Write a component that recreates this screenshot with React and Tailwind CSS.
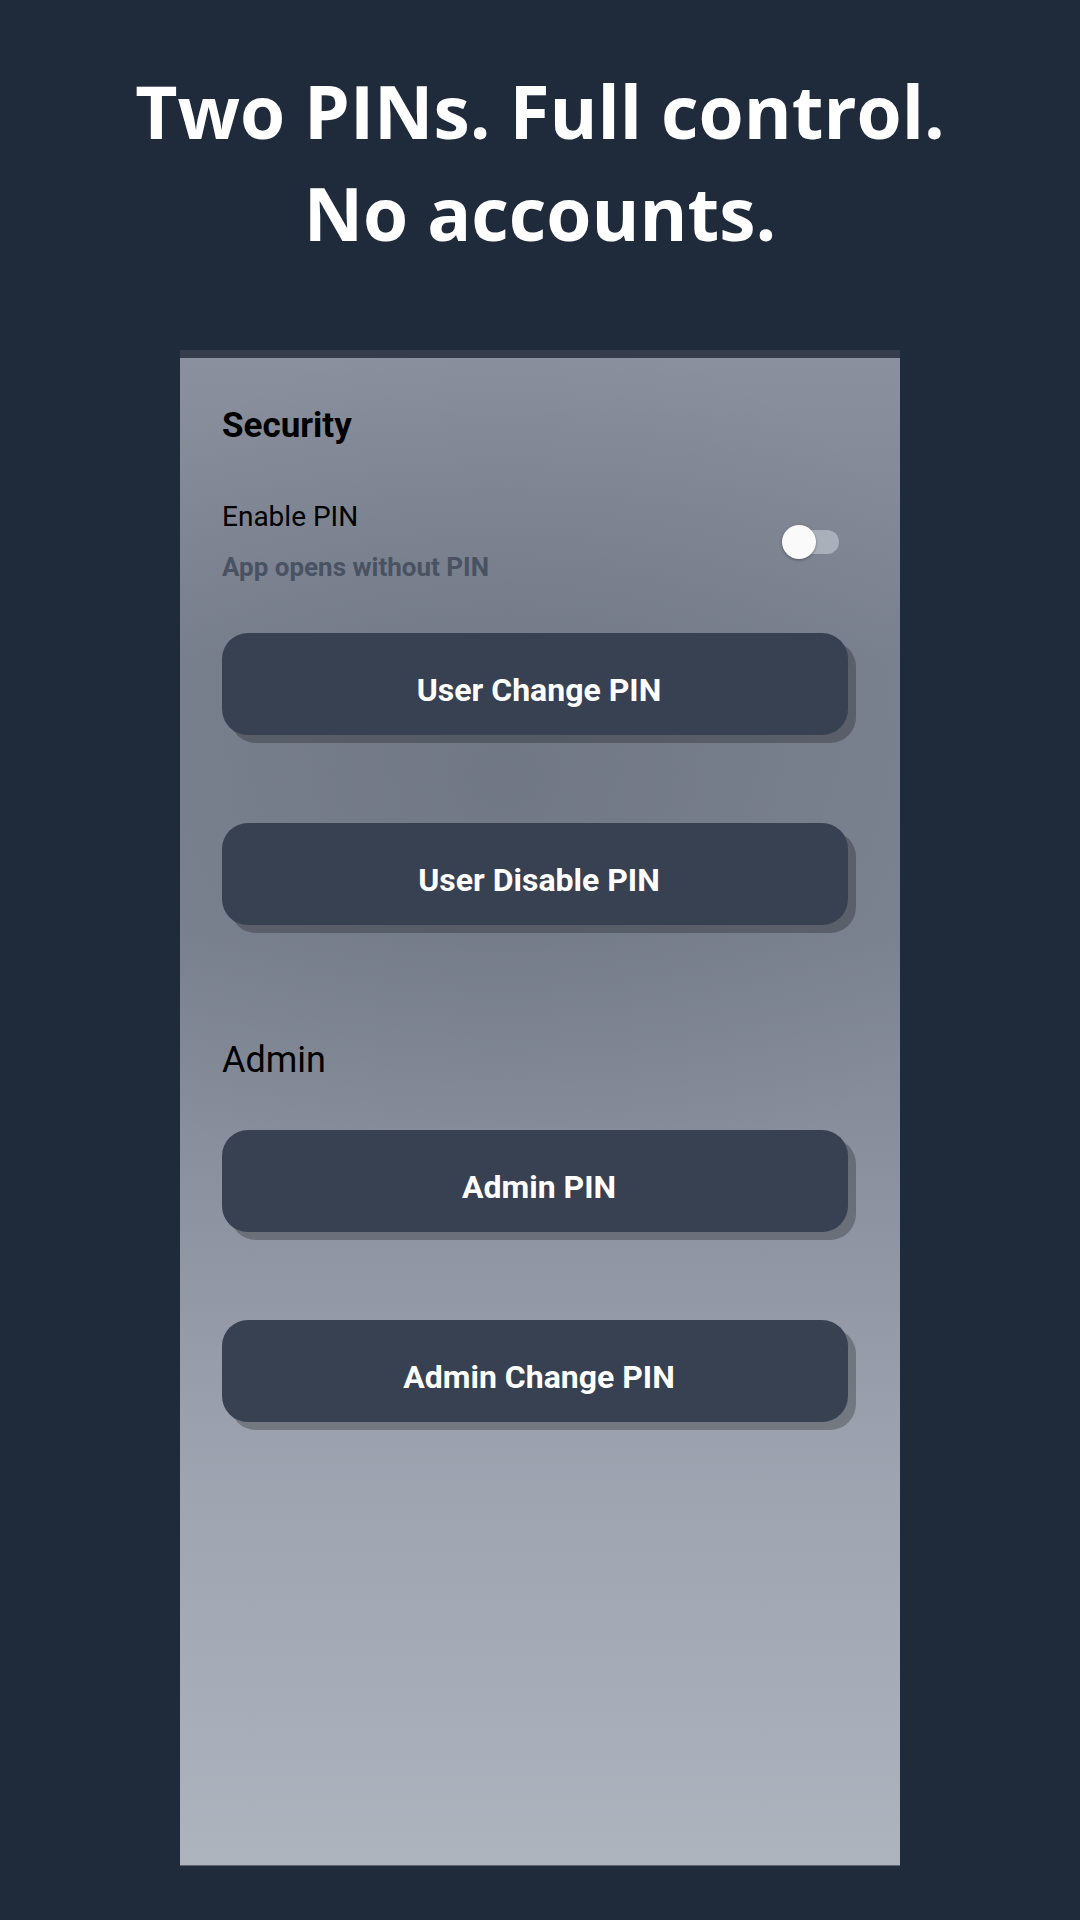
import React, { useState } from "react";

function PinButton({ label, className = "" }) {
	return (
		<button
			className={
				"flex h-[102px] w-[626px] items-center justify-center rounded-[26px] bg-[#374151] pl-[8px] pt-[11px] text-[32px] font-bold leading-[36px] text-white shadow-[8px_8px_0_rgba(0,0,0,0.25)] " +
				className
			}>
			{label}
		</button>
	);
}

function Toggle({ on, onChange }) {
	return (
		<button
			onClick={() => onChange(!on)}
			className="relative mr-[9px] h-[34px] w-[57px] shrink-0">
			<span className="absolute left-[2px] top-[5px] h-[24px] w-[55px] rounded-full bg-[#aab0ba]" />
			<span className="absolute left-0 top-0 h-[34px] w-[34px] rounded-full bg-[#fafafa] shadow-[0_1px_3px_rgba(0,0,0,0.35)]" />
		</button>
	);
}

export default function App() {
	const [pinOn, setPinOn] = useState(false);

	return (
		<div className="flex h-[1920px] w-[1080px] flex-col items-center overflow-hidden bg-[#1f2a3b] font-['Roboto',sans-serif]">
			<h1 className="pt-[60px] text-center font-['Open_Sans',sans-serif] text-[73px] font-bold leading-[102px] text-white">
				Two PINs. Full control.
				<br />
				No accounts.
			</h1>

			<div className="mt-[86px] flex h-[1516px] w-[720px] flex-col border-t-8 border-b border-t-[#353d4c] border-b-[#5f646e] bg-[radial-gradient(ellipse_70%_30%_at_45%_28%,rgba(60,66,80,0.18),transparent),linear-gradient(to_bottom,#8a909d_0%,#7b8290_20%,#7c8391_38%,#9ea4b0_75%,#aeb4be_100%)] pl-[42px] pr-[52px]">
				<h2 className="pt-[48px] text-[35px] font-bold leading-[40px] text-black">Security</h2>

				<div className="mt-[55px] flex items-center justify-between">
					<div>
						<p className="text-[28px] leading-[32px] text-black">Enable PIN</p>
						<p className="mt-[18px] text-[26px] font-bold leading-[32px] text-[#495262]">
							App opens without PIN
						</p>
					</div>
					<Toggle on={pinOn} onChange={setPinOn} />
				</div>

				<PinButton label="User Change PIN" className="mt-[50px]" />
				<PinButton label="User Disable PIN" className="mt-[88px]" />

				<h3 className="mt-[115px] text-[36px] leading-[40px] text-black">Admin</h3>

				<PinButton label="Admin PIN" className="mt-[50px]" />
				<PinButton label="Admin Change PIN" className="mt-[88px]" />
			</div>
		</div>
	);
}
